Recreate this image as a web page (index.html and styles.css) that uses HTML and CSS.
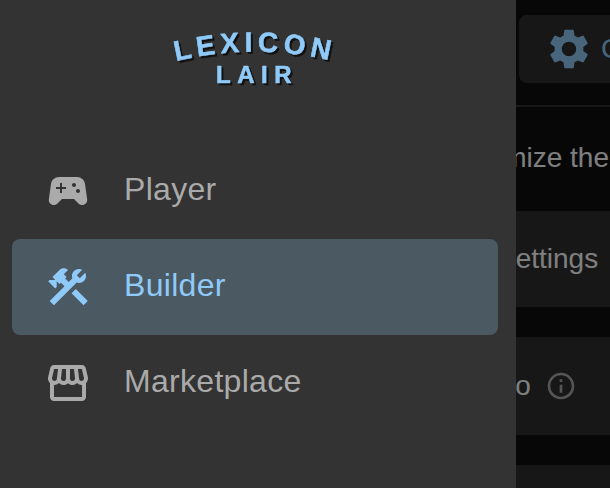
FILE: index.html
```html
<!DOCTYPE html>
<html lang="en">
<head>
    <meta charset="UTF-8">
    <meta name="viewport" content="width=device-width, initial-scale=1.0">
    <title>Lexicon Lair</title>
    <link rel="stylesheet" href="styles.css">
</head>
<body>
    <!-- page behind the drawer -->
    <main class="page">
        <header class="top-bar">
            <div class="settings-tab">
                <svg class="gear" viewBox="0 0 24 24"><path d="M19.14 12.94c.04-.3.06-.61.06-.94 0-.32-.02-.64-.07-.94l2.03-1.58c.18-.14.23-.41.12-.61l-1.92-3.32c-.12-.22-.37-.29-.59-.22l-2.39.96c-.5-.38-1.03-.7-1.62-.94l-.36-2.54c-.04-.24-.24-.41-.48-.41h-3.84c-.24 0-.43.17-.47.41l-.36 2.54c-.59.24-1.13.57-1.62.94l-2.39-.96c-.22-.08-.47 0-.59.22L2.74 8.87c-.12.21-.08.47.12.61l2.03 1.58c-.05.3-.09.63-.09.94s.02.64.07.94l-2.03 1.58c-.18.14-.23.41-.12.61l1.92 3.32c.12.22.37.29.59.22l2.39-.96c.5.38 1.03.7 1.62.94l.36 2.54c.05.24.24.41.48.41h3.84c.24 0 .44-.17.47-.41l.36-2.54c.59-.24 1.13-.56 1.62-.94l2.39.96c.22.08.47 0 .59-.22l1.92-3.32c.12-.22.07-.47-.12-.61l-2.01-1.58zM12 15.6c-1.98 0-3.6-1.62-3.6-3.6s1.62-3.6 3.6-3.6 3.6 1.62 3.6 3.6-1.62 3.6-3.6 3.6z"/></svg>
                <span class="tab-label">Customize</span>
            </div>
        </header>
        <p class="intro">Customize the</p>
        <section class="card">Settings</section>
        <section class="card card-info">
            <span>Info</span>
            <svg class="info" viewBox="0 0 24 24"><path d="M11 7h2v2h-2zm0 4h2v6h-2zm1-9C6.48 2 2 6.48 2 12s4.48 10 10 10 10-4.48 10-10S17.52 2 12 2zm0 18c-4.41 0-8-3.59-8-8s3.59-8 8-8 8 3.59 8 8-3.59 8-8 8z"/></svg>
        </section>
        <section class="card card-last"></section>
    </main>

    <div class="backdrop"></div>

    <nav class="drawer">
        <svg class="logo" viewBox="0 0 516 143">
            <defs>
                <path id="logo-arc" d="M160 65.6 A333 333 0 0 1 350 65.6"/>
            </defs>
            <text class="logo-text logo-top"><textPath href="#logo-arc" startOffset="50%">LEXICON</textPath></text>
            <text class="logo-text logo-bottom" x="257" y="83">LAIR</text>
        </svg>

        <a class="nav-item">
            <svg class="nav-icon" viewBox="0 0 24 24"><path d="M21.58 16.09l-1.09-7.66C20.21 6.46 18.52 5 16.53 5H7.47C5.48 5 3.79 6.46 3.51 8.43l-1.09 7.66C2.2 17.63 3.39 19 4.94 19c.68 0 1.32-.27 1.8-.75L9 16h6l2.25 2.25c.48.48 1.13.75 1.8.75 1.56 0 2.75-1.37 2.53-2.91zM11 11H9v2H8v-2H6v-1h2V8h1v2h2v1zm4-1c-.55 0-1-.45-1-1s.45-1 1-1 1 .45 1 1-.45 1-1 1zm2 3c-.55 0-1-.45-1-1s.45-1 1-1 1 .45 1 1-.45 1-1 1z"/></svg>
            <span class="nav-label">Player</span>
        </a>
        <a class="nav-item selected">
            <svg class="nav-icon" viewBox="0 0 24 24"><path d="m13.7826 15.1719 2.1213-2.1213 5.9963 5.9962-2.1213 2.1213zM17.5 10c1.93 0 3.5-1.57 3.5-3.5 0-.58-.16-1.12-.41-1.6l-2.7 2.7-1.49-1.49 2.7-2.7c-.48-.25-1.02-.41-1.6-.41C15.57 3 14 4.57 14 6.5c0 .41.08.8.21 1.16l-1.85 1.85-1.78-1.78.71-.71-1.41-1.41L12 3.49c-1.17-1.17-3.07-1.17-4.24 0L4.22 7.03l1.41 1.41H2.81l-.71.71 3.54 3.54.71-.71V9.15l1.41 1.41.71-.71 1.78 1.78-7.41 7.41 2.12 2.12L16.34 9.79c.36.13.75.21 1.16.21z"/></svg>
            <span class="nav-label">Builder</span>
        </a>
        <a class="nav-item">
            <svg class="nav-icon" viewBox="0 0 24 24"><path d="M21.9 8.89l-1.05-4.37c-.22-.9-1-1.52-1.91-1.52H5.05c-.9 0-1.69.63-1.9 1.52L2.1 8.89c-.24 1.02-.02 2.06.62 2.88.08.11.19.19.28.29V19c0 1.1.9 2 2 2h14c1.1 0 2-.9 2-2v-6.94c.09-.09.2-.18.28-.28.64-.82.87-1.87.62-2.89zm-2.99-3.9l1.05 4.37c.1.42.01.84-.25 1.17-.14.18-.44.47-.94.47-.61 0-1.14-.49-1.21-1.14L16.98 5l1.93-.01zM13 5h1.96l.54 4.52c.05.39-.07.78-.33 1.07-.22.26-.54.41-.95.41-.67 0-1.22-.59-1.22-1.31V5zM8.49 9.52L9.04 5H11v4.69c0 .72-.55 1.31-1.29 1.31-.34 0-.65-.15-.89-.41-.25-.29-.37-.68-.33-1.07zm-4.45-.16L5.05 5h1.97l-.58 4.86c-.08.65-.6 1.14-1.21 1.14-.49 0-.8-.29-.93-.47-.27-.32-.36-.75-.26-1.17zM5 19v-6.03c.08.01.15.03.23.03.87 0 1.66-.36 2.24-.95.6.6 1.4.95 2.31.95.87 0 1.65-.36 2.23-.93.59.57 1.39.93 2.29.93.84 0 1.64-.35 2.24-.95.58.59 1.37.95 2.24.95.08 0 .15-.02.23-.03V19H5z"/></svg>
            <span class="nav-label">Marketplace</span>
        </a>
    </nav>
</body>
</html>
```

FILE: styles.css
```css
body {
    font-family: "Liberation Sans", Arial, sans-serif;
    margin: 0;
    background-color: #0e0e0e;
}

/* page behind the drawer */
.page {
    width: 610px;
    height: 488px;
    overflow: hidden;
    color: #fff;
    font-size: 28px;
    white-space: nowrap;
}

.top-bar {
    height: 90px;
    padding: 15px 0 0 519px;
    border-bottom: 2px solid #2e2e2e;
}

.settings-tab {
    display: flex;
    align-items: center;
    gap: 8px;
    height: 68px;
    padding-left: 26px;
    background-color: #2e2e2e;
    border-radius: 8px 0 0 8px;
}

.gear {
    flex-shrink: 0;
    width: 48px;
    height: 48px;
    fill: #90caf9;
}

.tab-label {
    color: #90caf9;
}

.intro {
    height: 104px;
    margin: 0;
    padding: 35px 0 0 430px;
    line-height: 32px;
    box-sizing: border-box;
}

.card {
    display: flex;
    align-items: center;
    height: 96px;
    margin-bottom: 30px;
    padding-left: 497px;
    background-color: #2e2e2e;
}

.card-info {
    gap: 16px;
    height: 98px;
    padding-left: 484px;
}

.card-last {
    height: 25px;
    margin-bottom: 0;
}

.info {
    width: 32px;
    height: 32px;
    margin-left: -2px;
    fill: #aaa;
}

.backdrop {
    position: fixed;
    inset: 0;
    background-color: rgba(0, 0, 0, 0.5);
}

.drawer {
    position: fixed;
    left: 0;
    top: 0;
    bottom: 0;
    width: 516px;
    background-color: #333;
}

.logo {
    display: block;
    width: 516px;
    height: 143px;
}

.logo-text {
    font-weight: bold;
    text-anchor: middle;
    fill: #90caf9;
    stroke: #90caf9;
    stroke-width: 0.6px;
    filter: drop-shadow(2px 2px 0 #111);
}

.logo-top {
    font-size: 28px;
    letter-spacing: 5px;
}

.logo-bottom {
    font-size: 24px;
    letter-spacing: 6.5px;
}

.nav-item {
    display: flex;
    align-items: center;
    height: 96px;
    margin: 0 18px 0 12px;
    padding-left: 32px;
    border-radius: 8px;
    font-size: 32px;
    letter-spacing: 0.3px;
    color: #aaa;
}

.nav-item.selected {
    color: #90caf9;
    background-color: #4b5963;
}

.nav-icon {
    width: 48px;
    height: 48px;
    margin-right: 32px;
    fill: currentColor;
}

.nav-label {
    padding-bottom: 4px;
}
```
